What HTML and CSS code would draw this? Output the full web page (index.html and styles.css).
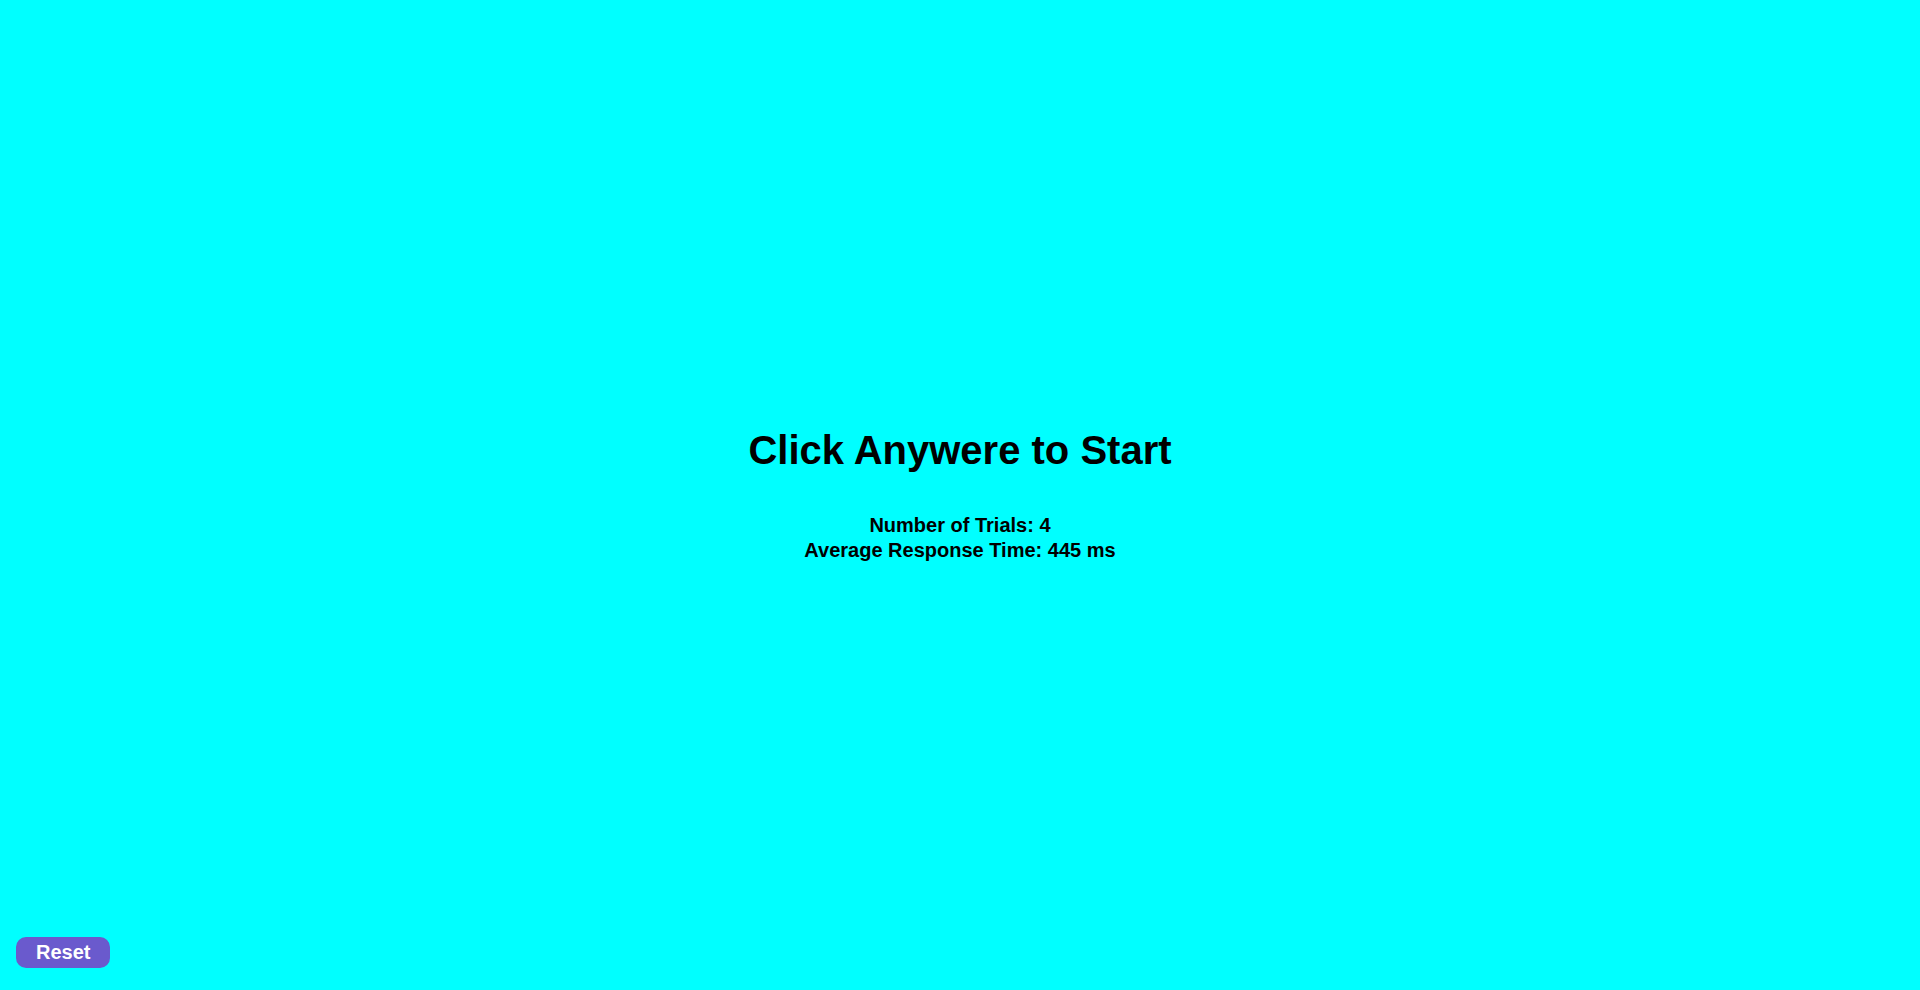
FILE: index.html
```html
<!DOCTYPE html>
<html lang="en">
<head>
<meta charset="utf-8">
<title>Reaction Time</title>
<link rel="stylesheet" href="styles.css">
</head>
<body>
<main class="screen">
  <h1 class="title">Click Anywere to Start</h1>
  <div class="stats">
    <div class="stat">Number of Trials: 4</div>
    <div class="stat">Average Response Time: 445 ms</div>
  </div>
</main>
<button class="reset">Reset</button>
</body>
</html>
```
FILE: styles.css
```css
html, body {
  margin: 0;
  padding: 0;
  height: 100%;
}
body {
  background: #00ffff;
  font-family: "Liberation Sans", Arial, sans-serif;
  color: #000;
}
.screen {
  height: 100vh;
  display: flex;
  flex-direction: column;
  align-items: center;
  justify-content: center;
  text-align: center;
}
.title {
  margin: 0;
  font-size: 40px;
  font-weight: bold;
  line-height: 46px;
}
.stats {
  margin-top: 40px;
  font-size: 20px;
  font-weight: bold;
  line-height: 25px;
}
.reset {
  position: fixed;
  left: 16px;
  bottom: 22px;
  height: 31px;
  box-sizing: border-box;
  background: #6a5acd;
  color: #fff;
  border: none;
  border-radius: 10px;
  font-family: "Liberation Sans", Arial, sans-serif;
  font-size: 20px;
  font-weight: bold;
  padding: 4px 20px;
  line-height: 23px;
  cursor: pointer;
}
```
